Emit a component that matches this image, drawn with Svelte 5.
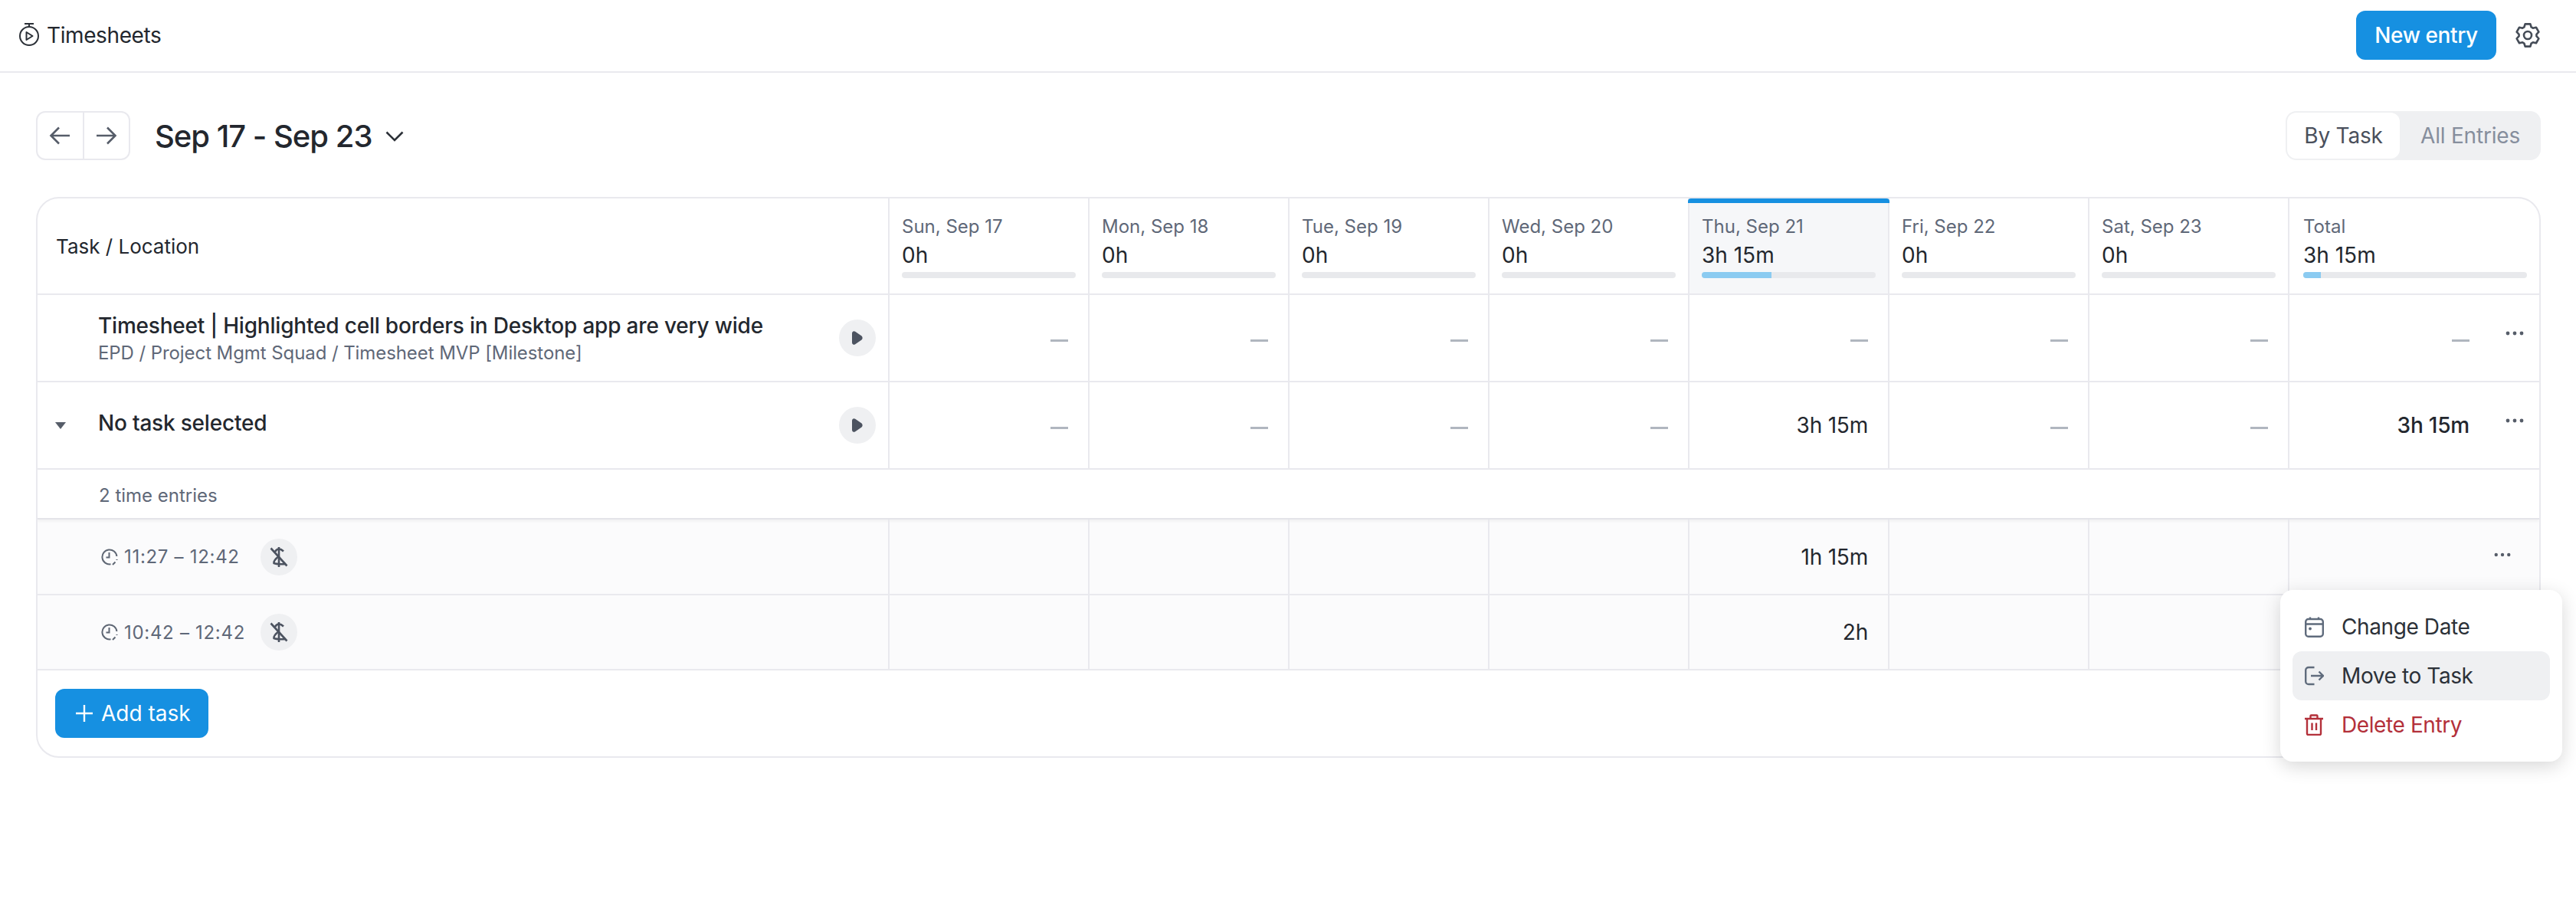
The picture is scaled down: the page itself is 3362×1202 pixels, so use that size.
<script lang="ts">
  const days = [
    { label: "Sun, Sep 17", total: "0h" },
    { label: "Mon, Sep 18", total: "0h" },
    { label: "Tue, Sep 19", total: "0h" },
    { label: "Wed, Sep 20", total: "0h" },
    { label: "Thu, Sep 21", total: "3h 15m", today: true, pct: 40 },
    { label: "Fri, Sep 22", total: "0h" },
    { label: "Sat, Sep 23", total: "0h" },
  ];
  const entries = [
    { time: "11:27 – 12:42", hours: "1h 15m" },
    { time: "10:42 – 12:42", hours: "2h" },
  ];
  const blanks = [0, 1, 2, 3, 4, 5, 6];

  // Six-tooth cog outline, centred on 17,17.
  function cog(): string {
    const pts: string[] = [];
    for (let i = 0; i < 6; i++) {
      const a = -90 + i * 60;
      for (const [off, r] of [[-24, 11.5], [-13, 15], [13, 15], [24, 11.5]]) {
        const t = ((a + off) * Math.PI) / 180;
        pts.push(`${(17 + r * Math.cos(t)).toFixed(2)} ${(17 + r * Math.sin(t)).toFixed(2)}`);
      }
    }
    return "M" + pts.join("L") + "z";
  }
</script>

{#snippet dots()}
  <svg class="dots" viewBox="0 0 24 6"><circle cx="3" cy="3" r="2.400" /><circle cx="12" cy="3" r="2.400" /><circle cx="21" cy="3" r="2.400" /></svg>
{/snippet}

{#snippet play()}
  <span class="play">
    <svg width="14" height="18" viewBox="0 0 14 18"><path d="M0 3C0 .6 2.300-.6 4.200.7l8 5.600c1.900 1.300 1.900 4.100 0 5.400l-8 5.600C2.300 18.600 0 17.400 0 15z" /></svg>
  </span>
{/snippet}

{#snippet nobill()}
  <span class="nobill">
    <svg width="24" height="28" viewBox="0 0 24 28" fill="none" stroke="#4c5360" stroke-width="2.600">
      <path d="M1.500 2.500 22.500 25.500" />
      <path d="M12 1v26" />
      <path d="M7 7c1.500-2.500 3-3.500 5-3.500s4 1 6 3" />
      <path d="M12 13c-3.500 2.500-7 5.500-6.500 9 3 1.500 9 1.500 15.500 1" />
    </svg>
  </span>
{/snippet}

{#snippet clock()}
  <svg class="clock" width="22" height="22" viewBox="0 0 22 22" fill="none" stroke="#5f6774" stroke-width="2">
    <path d="M12.500 20.300A9.500 9.500 0 1 1 20.400 10" />
    <path d="M10.500 5v6.500H6.500" />
    <path d="M15 21l3.500-3.500M20.500 14v1" />
  </svg>
{/snippet}

<div class="page">
  <header class="topbar">
    <div class="brand">
      <svg width="26" height="30" viewBox="0 0 26 30" fill="none" stroke="#2c3138" stroke-width="2">
        <path d="M7 1h12M13 1v4" />
        <circle cx="13" cy="17" r="12" />
        <path d="M9.500 12 17.500 17 9.500 22z" stroke-linejoin="round" />
      </svg>
      <span>Timesheets</span>
    </div>
    <div class="top-actions">
      <button class="btn primary">New entry</button>
      <svg class="gear" width="34" height="34" viewBox="0 0 34 34" fill="none" stroke="#454c57" stroke-width="2.600" stroke-linejoin="round">
        <path d={cog()} />
        <circle cx="17" cy="17" r="5" />
      </svg>
    </div>
  </header>

  <main class="content">
    <div class="toolbar">
      <div class="range">
        <div class="arrows">
          <button aria-label="Previous week">
            <svg width="28" height="28" viewBox="0 0 28 28" fill="none" stroke="#565d69" stroke-width="2.600"><path d="M27 14H3M13 3.500 2.500 14 13 24.500" /></svg>
          </button>
          <button aria-label="Next week">
            <svg width="28" height="28" viewBox="0 0 28 28" fill="none" stroke="#565d69" stroke-width="2.600"><path d="M1 14h24M15 3.500 25.500 14 15 24.500" /></svg>
          </button>
        </div>
        <h1>Sep 17 - Sep 23</h1>
        <svg class="caret" width="24" height="16" viewBox="0 0 24 16" fill="none" stroke="#2c3138" stroke-width="2.600"><path d="M1.500 2.500 12 13 22.500 2.500" /></svg>
      </div>
      <div class="tabs">
        <span class="tab on">By Task</span>
        <span class="tab">All Entries</span>
      </div>
    </div>

    <div class="sheet">
      <div class="row head">
        <div class="cell first"><span class="task-head">Task / Location</span></div>
        {#each days as d}
          <div class="cell day" class:today={d.today}>
            <span class="day-label">{d.label}</span>
            <span class="day-total">{d.total}</span>
            <span class="bar"><span class="fill" style="width: {d.pct ?? 0}%"></span></span>
          </div>
        {/each}
        <div class="cell day last">
          <span class="day-label">Total</span>
          <span class="day-total">3h 15m</span>
          <span class="bar"><span class="fill" style="width: 8%"></span></span>
        </div>
      </div>

      <div class="row task">
        <div class="cell first">
          <span class="toggle"></span>
          <div class="title">
            <strong>Timesheet | Highlighted cell borders in Desktop app are very wide</strong>
            <small>EPD / Project Mgmt Squad / Timesheet MVP [Milestone]</small>
          </div>
          {@render play()}
        </div>
        {#each blanks as i}
          <div class="cell num"><span class="dash"></span></div>
        {/each}
        <div class="cell num last">
          <span class="dash"></span>
          <span class="more">{@render dots()}</span>
        </div>
      </div>

      <div class="row task">
        <div class="cell first">
          <span class="toggle"><span class="tri"></span></span>
          <div class="title"><strong class="raised">No task selected</strong></div>
          {@render play()}
        </div>
        {#each blanks as i}
          <div class="cell num">
            {#if i === 4}3h 15m{:else}<span class="dash"></span>{/if}
          </div>
        {/each}
        <div class="cell num last">
          <b>3h 15m</b>
          <span class="more">{@render dots()}</span>
        </div>
      </div>

      <div class="count">2 time entries</div>

      {#each entries as e, n}
        <div class="row entry" class:top={n === 0}>
          <div class="cell first">
            <div class="when">
              {@render clock()}
              <span>{e.time}</span>
            </div>
            {@render nobill()}
          </div>
          {#each blanks as i}
            <div class="cell num">{#if i === 4}{e.hours}{/if}</div>
          {/each}
          <div class="cell num last">
            {#if n === 0}<span class="more">{@render dots()}</span>{/if}
          </div>
        </div>
      {/each}

      <div class="foot">
        <button class="btn primary add">
          <svg width="24" height="24" viewBox="0 0 24 24" fill="none" stroke="#fff" stroke-width="2.400"><path d="M12 1v22M1 12h22" /></svg>
          Add task
        </button>
      </div>
    </div>
  </main>

  <div class="menu">
    <div class="item">
      <svg width="25" height="27" viewBox="0 0 25 27" fill="none" stroke="#5f6b7c" stroke-width="2.400">
        <rect x="1.200" y="3" width="22.600" height="22.800" rx="3.500" />
        <path d="M1.200 9.500h22.600M7 .5v3M18 .5v3" />
        <circle cx="7" cy="15.500" r="1.900" fill="#5f6b7c" stroke="none" />
      </svg>
      Change Date
    </div>
    <div class="item hover">
      <svg width="25" height="26" viewBox="0 0 25 26" fill="none" stroke="#5f6b7c" stroke-width="2.400">
        <path d="M12.500 2H5a3.800 3.800 0 0 0-3.800 3.800v14.400A3.800 3.800 0 0 0 5 24h7.500" />
        <path d="M8 13h16M18.500 7.500 24 13l-5.500 5.500" />
      </svg>
      Move to Task
    </div>
    <div class="item danger">
      <svg width="25" height="28" viewBox="0 0 25 28" fill="none" stroke="#b3303a" stroke-width="2.400">
        <path d="M0 6h24M3 6v19.500A1.500 1.500 0 0 0 4.500 27h15a1.500 1.500 0 0 0 1.500-1.500V6M7.500 6V2.500a1 1 0 0 1 1-1h7a1 1 0 0 1 1 1V6M9.500 11.500v9.500M15 11.500v9.500" />
      </svg>
      Delete Entry
    </div>
  </div>
</div>

<style>
  :global(body) {
    margin: 0;
    background: #fff;
  }
  .page {
    position: relative;
    width: 3362px;
    height: 1202px;
    overflow: hidden;
    font-family: Inter, "Liberation Sans", sans-serif;
    font-size: 28px;
    letter-spacing: -0.2px;
    color: #23272e;
  }
  .topbar {
    height: 95px;
    box-sizing: border-box;
    border-bottom: 2px solid #e9e9ee;
    padding: 14px 46px 0 25px;
    display: flex;
    justify-content: space-between;
    align-items: flex-start;
  }
  .brand {
    display: flex;
    align-items: center;
    gap: 10px;
    height: 64px;
    letter-spacing: -0.4px;
  }
  .brand svg {
    margin-top: -2px;
  }
  .top-actions {
    display: flex;
    align-items: center;
    gap: 24px;
  }
  .btn {
    font: inherit;
    letter-spacing: inherit;
    border: none;
    border-radius: 12px;
    cursor: pointer;
  }
  .btn.primary {
    background: #1690e1;
    color: #fff;
    font-weight: 500;
  }
  .top-actions .btn {
    width: 183px;
    height: 64px;
    padding: 0;
    letter-spacing: -0.4px;
  }
  .content {
    padding: 50px 46px 0 47px;
  }
  .toolbar {
    display: flex;
    justify-content: space-between;
    align-items: center;
    height: 64px;
    margin-bottom: 48px;
  }
  .range {
    display: flex;
    align-items: center;
  }
  .arrows {
    display: flex;
    width: 123px;
    height: 64px;
    box-sizing: border-box;
    border: 2px solid #e9e9ee;
    border-radius: 12px;
  }
  .arrows button {
    flex: 1;
    background: none;
    border: none;
    padding: 0;
    display: flex;
    align-items: center;
    justify-content: center;
  }
  .arrows button + button {
    border-left: 2px solid #e9e9ee;
  }
  h1 {
    margin: 0 18px 0 32px;
    font-size: 40px;
    font-weight: 500;
    letter-spacing: -1px;
    color: #23272e;
  }
  .caret {
    margin-top: 2px;
  }
  .tabs {
    display: flex;
    height: 64px;
    box-sizing: border-box;
    background: #eff0f2;
    border-radius: 14px;
    padding: 2px;
    width: 333px;
  }
  .tab {
    flex: 1;
    display: flex;
    align-items: center;
    justify-content: center;
    color: #868e9d;
    padding-left: 2px;
  }
  .tab.on {
    flex: 0 0 147px;
    padding-left: 0;
    background: #fff;
    color: #4a505c;
    border-radius: 12px;
  }
  .sheet {
    border: 2px solid #e9e9ee;
    border-radius: 30px;
    overflow: hidden;
    background: #fff;
  }
  .row {
    display: grid;
    grid-template-columns: 1112px repeat(7, 261px) 1fr;
    box-sizing: border-box;
    border-bottom: 2px solid #e9e9ee;
  }
  .cell {
    box-sizing: border-box;
    border-right: 2px solid #e9e9ee;
    display: flex;
    min-width: 0;
  }
  .cell.last {
    border-right: none;
  }
  .head {
    height: 126px;
  }
  .head .first {
    align-items: center;
    padding-left: 24px;
    font-size: 26px;
    letter-spacing: 0;
  }
  .day {
    flex-direction: column;
    padding: 21px 16px 0 16px;
    position: relative;
  }
  .day.last {
    padding-left: 18px;
  }
  .day.today {
    background: #f6f7f9;
  }
  .day.today::before {
    content: "";
    position: absolute;
    left: -2px;
    right: -2px;
    top: 0;
    height: 6px;
    background: #1690e1;
    border-radius: 4px 4px 0 0;
  }
  .day-label {
    font-size: 24px;
    line-height: 32px;
    letter-spacing: 0;
    color: #5f6878;
  }
  .day-total {
    font-size: 28px;
    line-height: 36px;
    margin-top: 3px;
    letter-spacing: 0;
  }
  .bar {
    height: 8px;
    border-radius: 4px;
    background: #e8e9ec;
    margin-top: 4px;
    overflow: hidden;
    display: block;
  }
  .fill {
    display: block;
    height: 100%;
    background: #8bcbf1;
  }
  .task {
    height: 114px;
  }
  .first {
    align-items: center;
    position: relative;
  }
  .toggle {
    width: 79px;
    flex: none;
    box-sizing: border-box;
    padding-left: 23px;
    display: flex;
  }
  .tri {
    width: 0;
    height: 0;
    border-left: 7px solid transparent;
    border-right: 7px solid transparent;
    border-top: 9px solid #565d69;
  }
  .title {
    flex: 1;
    display: flex;
    flex-direction: column;
    gap: 2px;
  }
  .title strong {
    font-weight: 500;
    font-size: 28px;
    line-height: 38px;
  }
  .title .raised {
    margin-bottom: 6px;
  }
  .title small {
    font-size: 24px;
    line-height: 30px;
    letter-spacing: -0.08px;
    color: #5f6878;
  }
  .play {
    width: 48px;
    height: 48px;
    border-radius: 50%;
    background: #eff0f2;
    display: flex;
    align-items: center;
    justify-content: center;
    margin-right: 16px;
    flex: none;
  }
  .play path {
    fill: #4c5360;
  }
  .num {
    align-items: center;
    justify-content: flex-end;
    padding-right: 26px;
    position: relative;
  }
  .num.last {
    padding-right: 91px;
  }
  .num b {
    font-weight: 500;
  }
  .dash {
    width: 23px;
    height: 3px;
    background: #b0b6bf;
    margin-top: 6px;
  }
  .more {
    position: absolute;
    right: 20px;
    top: 47px;
    display: flex;
  }
  .dots {
    width: 24px;
    height: 6px;
  }
  .dots circle {
    fill: #565d69;
  }
  .count {
    height: 65px;
    box-sizing: border-box;
    border-bottom: 2px solid #e4e4e9;
    padding: 3px 0 0 80px;
    display: flex;
    align-items: center;
    font-size: 24px;
    letter-spacing: 0;
    color: #5f6878;
    box-shadow: 0 2px 4px rgba(0, 0, 0, 0.05);
    position: relative;
  }
  .entry {
    background: #fbfbfc;
    height: 98px;
  }
  .entry.top {
    height: 99px;
  }
  .entry .first {
    padding-left: 83px;
  }
  .when {
    display: flex;
    align-items: center;
    gap: 8px;
    font-size: 24px;
    letter-spacing: 0.7px;
    color: #5f6878;
    width: 208px;
  }
  .clock {
    flex: none;
  }
  .nobill {
    width: 48px;
    height: 48px;
    border-radius: 50%;
    background: #eff0f2;
    display: flex;
    align-items: center;
    justify-content: center;
  }
  .entry .more {
    right: 37px;
    top: 43px;
  }
  .entry .dots {
    width: 22px;
  }
  .foot {
    padding: 24px 23px;
    height: 112px;
    box-sizing: border-box;
  }
  .btn.add {
    height: 64px;
    width: 200px;
    padding: 0 0 0 26px;
    display: flex;
    align-items: center;
    gap: 10px;
    font-weight: 400;
    letter-spacing: 0;
  }
  .menu {
    position: absolute;
    left: 2976px;
    top: 770px;
    width: 368px;
    height: 224px;
    box-sizing: border-box;
    padding: 16px;
    background: #fff;
    border-radius: 16px;
    box-shadow: 0 6px 24px rgba(0, 0, 0, 0.16);
  }
  .item {
    height: 64px;
    display: flex;
    align-items: center;
    gap: 23px;
    padding-left: 16px;
    border-radius: 12px;
    font-size: 28px;
    letter-spacing: -0.4px;
    color: #2c3138;
  }
  .item.hover {
    background: #eff0f2;
  }
  .item.danger {
    color: #b3303a;
  }
</style>
